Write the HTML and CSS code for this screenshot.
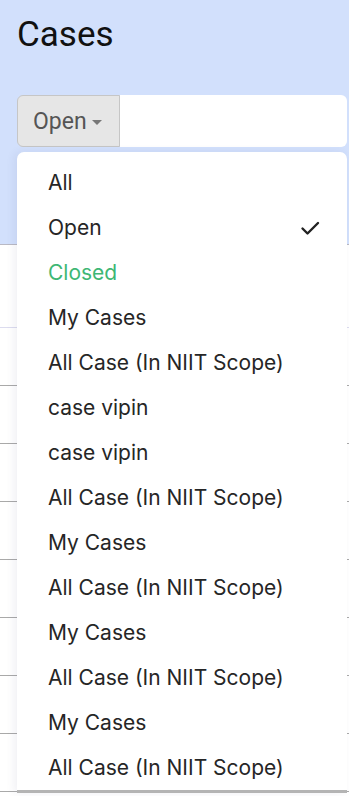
FILE: index.html
```html
<!DOCTYPE html>
<html lang="en">
<head>
    <meta charset="UTF-8">
    <meta name="viewport" content="width=device-width, initial-scale=1.0">
    <title>Cases</title>
    <link rel="stylesheet" href="styles.css">
</head>
<body>
    <div class="page">
        <header class="header">
            <h1>Cases</h1>
            <div class="search-group">
                <button class="filter-btn" type="button">Open<span class="caret"></span></button>
                <input class="search-input" type="text">
            </div>
        </header>

        <ul class="case-list">
            <li class="case-row first"></li>
            <li class="case-row"></li>
            <li class="case-row"></li>
            <li class="case-row"></li>
            <li class="case-row"></li>
            <li class="case-row"></li>
            <li class="case-row"></li>
            <li class="case-row"></li>
            <li class="case-row"></li>
        </ul>

        <!-- filter menu, open over the list -->
        <ul class="menu">
            <li class="menu-item">All</li>
            <li class="menu-item">Open
                <svg class="check" viewBox="0 0 24 24" width="24" height="24"><path d="M4.5 12.5l5 5L20 7" fill="none" stroke="#222" stroke-width="2.4" stroke-linecap="round" stroke-linejoin="round"/></svg>
            </li>
            <li class="menu-item closed">Closed</li>
            <li class="menu-item">My Cases</li>
            <li class="menu-item">All Case (In NIIT Scope)</li>
            <li class="menu-item">case vipin</li>
            <li class="menu-item">case vipin</li>
            <li class="menu-item">All Case (In NIIT Scope)</li>
            <li class="menu-item">My Cases</li>
            <li class="menu-item">All Case (In NIIT Scope)</li>
            <li class="menu-item">My Cases</li>
            <li class="menu-item">All Case (In NIIT Scope)</li>
            <li class="menu-item">My Cases</li>
            <li class="menu-item">All Case (In NIIT Scope)</li>
        </ul>
    </div>
</body>
</html>
```

FILE: styles.css
```css
body {
    margin: 0;
    font-family: Roboto, "Liberation Sans", sans-serif;
    background-color: #ffffff;
    overflow: hidden;
}

.page {
    position: relative;
    height: 796px;
    overflow: hidden;
}

.header {
    background-color: #d2e0fc;
    padding: 14px 2px 0 17px;
    height: 230px;
    border-bottom: 1px solid #b9b9c4;
}

h1 {
    margin: 0;
    font-size: 35px;
    font-weight: 400;
    color: #111111;
    line-height: 42px;
}

.search-group {
    display: flex;
    margin-top: 39px;
    height: 52px;
}

.filter-btn {
    width: 103px;
    height: 52px;
    padding: 0 0 0 15px;
    text-align: left;
    background-color: #e6e6e6;
    border: 1px solid #c6c6c6;
    border-radius: 6px 0 0 6px;
    color: #555555;
    font-family: Roboto, "Liberation Sans", sans-serif;
    font-size: 23px;
}

.caret {
    display: inline-block;
    width: 0;
    height: 0;
    margin-left: 5px;
    vertical-align: middle;
    border-left: 5px solid transparent;
    border-right: 5px solid transparent;
    border-top: 5px solid #777777;
}

.search-input {
    flex: 1;
    min-width: 0;
    height: 52px;
    box-sizing: border-box;
    border: none;
    border-radius: 0 6px 6px 0;
    background-color: #ffffff;
}

.case-list {
    list-style: none;
    margin: 0;
    padding: 0;
}

.case-row {
    height: 57px;
    border-bottom: 1px solid #a9a9a9;
}

.case-row.first {
    height: 82px;
    border-bottom-color: #dcdcef;
}

.menu {
    position: absolute;
    top: 152px;
    left: 17px;
    width: 330px;
    height: 641px;
    box-sizing: border-box;
    margin: 0;
    padding: 8px 0 0 0;
    list-style: none;
    background-color: #ffffff;
    border-radius: 7px 7px 0 0;
    box-shadow: -3px 0 8px rgba(60, 60, 110, 0.08);
    border-bottom: 3px solid #b4b4b4;
    font-family: Inter, Roboto, sans-serif;
}

.menu-item {
    display: flex;
    align-items: center;
    justify-content: space-between;
    height: 45px;
    padding: 0 25px 0 31px;
    font-size: 21px;
    color: #262626;
}

.menu-item.closed {
    color: #3eb774;
}

.check {
    display: block;
}
```
